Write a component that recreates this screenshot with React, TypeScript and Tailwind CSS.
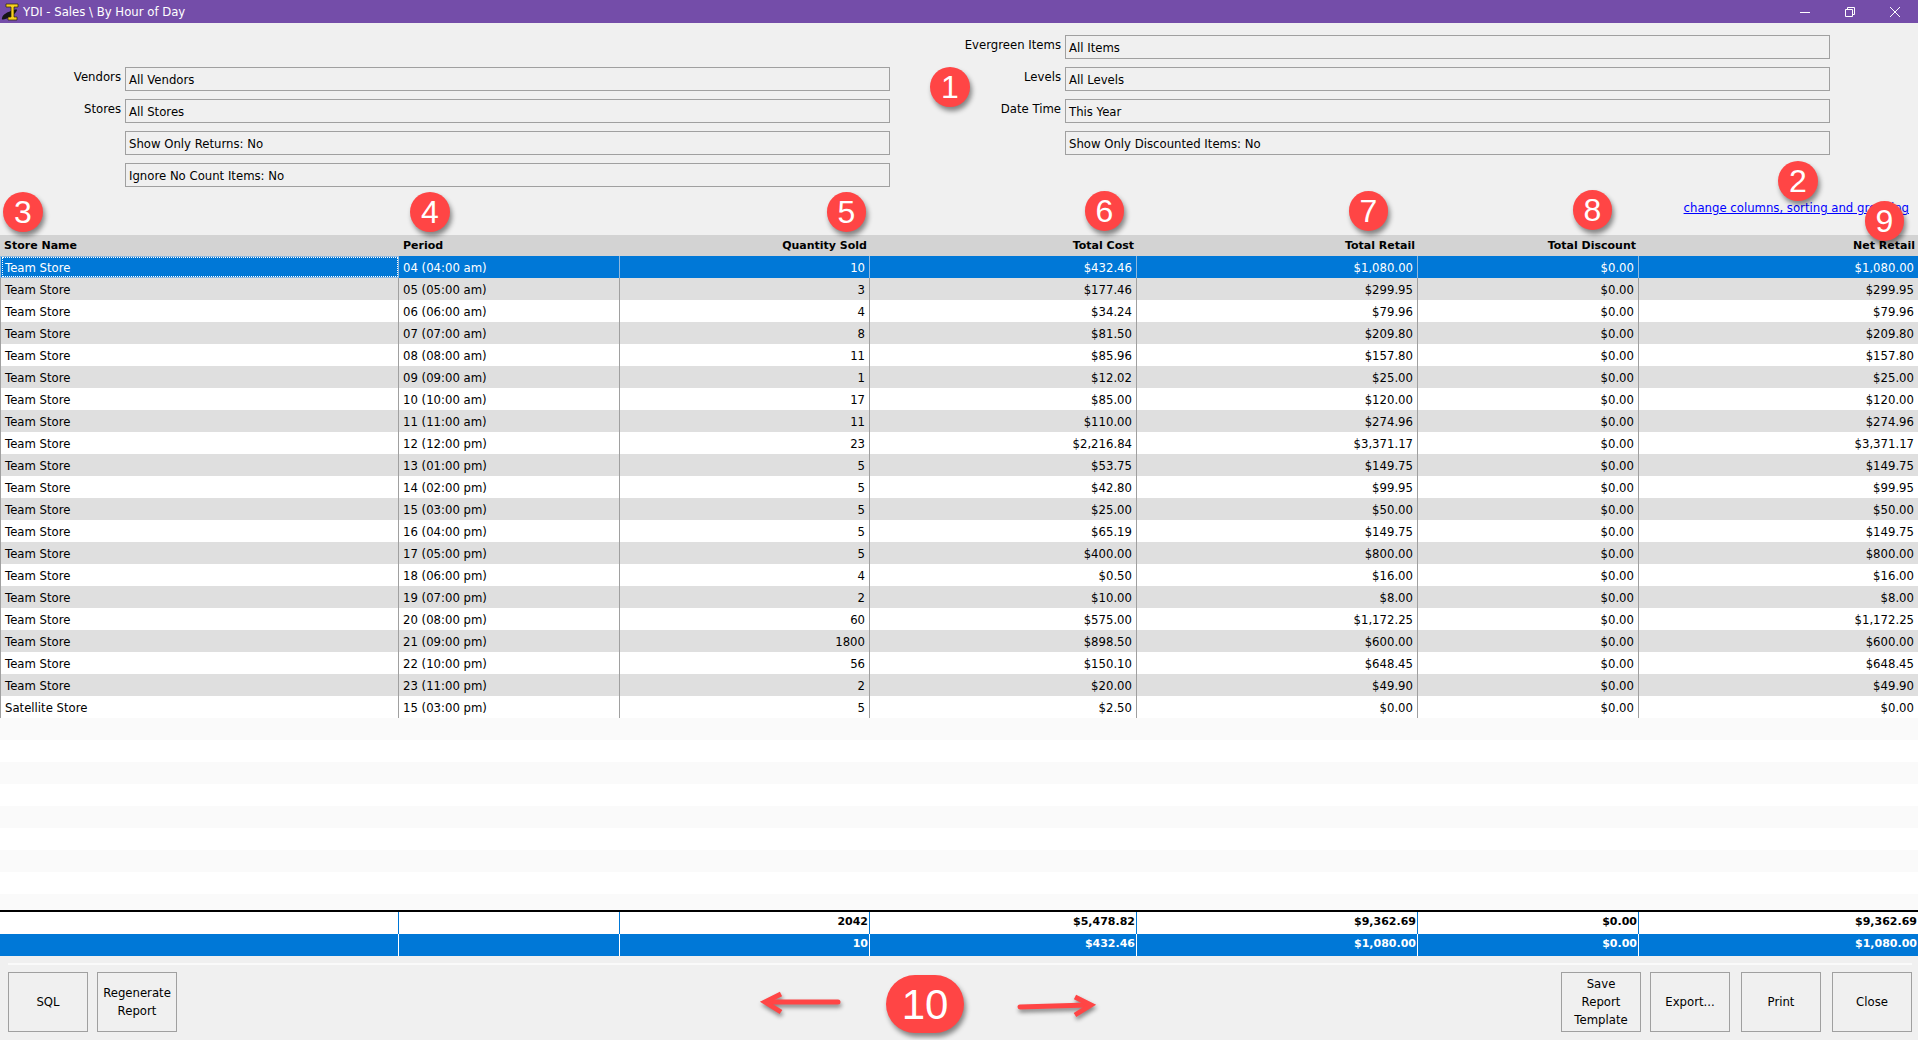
const rows: string[][] = [
  ["Team Store", "04 (04:00 am)", "10", "$432.46", "$1,080.00", "$0.00", "$1,080.00"],
  ["Team Store", "05 (05:00 am)", "3", "$177.46", "$299.95", "$0.00", "$299.95"],
  ["Team Store", "06 (06:00 am)", "4", "$34.24", "$79.96", "$0.00", "$79.96"],
  ["Team Store", "07 (07:00 am)", "8", "$81.50", "$209.80", "$0.00", "$209.80"],
  ["Team Store", "08 (08:00 am)", "11", "$85.96", "$157.80", "$0.00", "$157.80"],
  ["Team Store", "09 (09:00 am)", "1", "$12.02", "$25.00", "$0.00", "$25.00"],
  ["Team Store", "10 (10:00 am)", "17", "$85.00", "$120.00", "$0.00", "$120.00"],
  ["Team Store", "11 (11:00 am)", "11", "$110.00", "$274.96", "$0.00", "$274.96"],
  ["Team Store", "12 (12:00 pm)", "23", "$2,216.84", "$3,371.17", "$0.00", "$3,371.17"],
  ["Team Store", "13 (01:00 pm)", "5", "$53.75", "$149.75", "$0.00", "$149.75"],
  ["Team Store", "14 (02:00 pm)", "5", "$42.80", "$99.95", "$0.00", "$99.95"],
  ["Team Store", "15 (03:00 pm)", "5", "$25.00", "$50.00", "$0.00", "$50.00"],
  ["Team Store", "16 (04:00 pm)", "5", "$65.19", "$149.75", "$0.00", "$149.75"],
  ["Team Store", "17 (05:00 pm)", "5", "$400.00", "$800.00", "$0.00", "$800.00"],
  ["Team Store", "18 (06:00 pm)", "4", "$0.50", "$16.00", "$0.00", "$16.00"],
  ["Team Store", "19 (07:00 pm)", "2", "$10.00", "$8.00", "$0.00", "$8.00"],
  ["Team Store", "20 (08:00 pm)", "60", "$575.00", "$1,172.25", "$0.00", "$1,172.25"],
  ["Team Store", "21 (09:00 pm)", "1800", "$898.50", "$600.00", "$0.00", "$600.00"],
  ["Team Store", "22 (10:00 pm)", "56", "$150.10", "$648.45", "$0.00", "$648.45"],
  ["Team Store", "23 (11:00 pm)", "2", "$20.00", "$49.90", "$0.00", "$49.90"],
  ["Satellite Store", "15 (03:00 pm)", "5", "$2.50", "$0.00", "$0.00", "$0.00"],
];

const gridCols = "grid grid-cols-[399px_221px_250px_267px_281px_221px_279px]";

function FilterRow({ label, value, left }: { label?: string; value: string; left?: boolean }) {
  return (
    <div className="flex h-[24px]">
      <div className={`${left ? "w-[121px]" : "w-[170px]"} text-right leading-[20px]`}>{label}</div>
      <div className={`w-[765px] ml-[4px] border border-[#a0a0a0] pl-[3px] leading-[24px]`}>{value}</div>
    </div>
  );
}

function Btn({ children }: { children: React.ReactNode }) {
  return (
    <div className="w-[80px] h-[60px] border border-[#a0a0a0] flex items-center justify-center text-center leading-[18px] pb-[1px]">
      {children}
    </div>
  );
}

function Badge({ n, className }: { n: string; className: string }) {
  return (
    <div className={`absolute rounded-full bg-[#ff4545] text-white flex items-center justify-center [font-family:Liberation_Sans,sans-serif] shadow-[2px_4px_5px_rgba(0,0,0,0.45)] ${className}`}>
      {n}
    </div>
  );
}

export default function App() {
  return (
    <div className="relative w-full h-screen overflow-hidden flex flex-col bg-[#f0f0f0] text-black text-[11.7px] [font-family:DejaVu_Sans,sans-serif]">
      {/* title bar */}
      <div className="h-[23px] shrink-0 bg-[#744da9] flex items-center text-white">
        <svg width="20" height="20" viewBox="0 0 20 20" className="ml-[1px] shrink-0">
          <path d="M1 16c1-4 6-6 9-7 3-1 6-2 6-1s-3 5-7 7-9 4-8 1z" fill="#151515" />
          <path d="M5 2h12v3h-4v10h3v3H7v-3h3V5H5z" fill="#f8d020" stroke="#2a2200" strokeWidth="0.7" />
        </svg>
        <span className="ml-[2px] pt-[2px]">YDI - Sales \ By Hour of Day</span>
        <div className="ml-auto flex items-center pr-[18px] gap-[35px]">
          <svg width="10" height="10" viewBox="0 0 10 10"><path d="M0 5.5h10" stroke="#fff" strokeWidth="1" /></svg>
          <svg width="10" height="10" viewBox="0 0 10 10" fill="none" stroke="#fff" strokeWidth="1"><path d="M.5 2.5h7v7h-7zM2.5 2.5v-2h7v7h-2" /></svg>
          <svg width="10" height="10" viewBox="0 0 10 10" stroke="#fff" strokeWidth="1"><path d="M0 0l10 10M10 0L0 10" /></svg>
        </div>
      </div>

      {/* filters */}
      <div className="h-[212px] shrink-0 flex">
        <div className="w-[891px] shrink-0 pt-[44px] flex flex-col gap-[8px]">
          <FilterRow left label="Vendors" value="All Vendors" />
          <FilterRow left label="Stores" value="All Stores" />
          <FilterRow left value="Show Only Returns: No" />
          <FilterRow left value="Ignore No Count Items: No" />
        </div>
        <div className="flex-1 pt-[12px] flex flex-col gap-[8px]">
          <FilterRow label="Evergreen Items" value="All Items" />
          <FilterRow label="Levels" value="All Levels" />
          <FilterRow label="Date Time" value="This Year" />
          <FilterRow value="Show Only Discounted Items: No" />
          <div className="mt-[37px] pr-[9px] text-right">
            <span className="text-[#0000ff] underline">change columns, sorting and grouping</span>
          </div>
        </div>
      </div>

      {/* header */}
      <div className={`${gridCols} h-[21px] shrink-0 bg-[#d3d3d3] font-bold text-[11px] items-center pt-[1px]`}>
        <div className="pl-[4px]">Store Name</div>
        <div className="pl-[4px]">Period</div>
        {["Quantity Sold", "Total Cost", "Total Retail", "Total Discount", "Net Retail"].map((h) => (
          <div key={h} className="text-right pr-[3px]">{h}</div>
        ))}
      </div>

      {/* rows */}
      <div className="flex-1 min-h-0 overflow-hidden bg-white">
        {rows.map((r, i) => (
          <div
            key={i}
            className={`${gridCols} grid-rows-[22px] h-[22px] ${i === 0 ? "bg-[#0078d7] text-white" : i % 2 === 1 ? "bg-[#dfdfdf]" : "bg-white"}`}
          >
            {r.map((c, j) => (
              <div
                key={j}
                className={`leading-[24px] ${j < 6 ? `border-r ${i === 0 ? "border-[#8fb8de]" : "border-[#a0a0a0]"}` : ""} ${j === 0 ? (i === 0 ? "border-l border-l-[#8fb8de] border-y border-y-[#8fb8de]" : "border-l border-l-[#a0a0a0]") : ""} ${j < 2 ? "pl-[4px]" : "text-right pr-[4px]"}`}
              >
                {i === 0 && j === 0 ? (
                  <div className="h-full border border-dotted border-white -ml-[3px] pl-[2px] leading-[20px]">{c}</div>
                ) : (
                  c
                )}
              </div>
            ))}
          </div>
        ))}
        {[0, 1, 2, 3, 4, 5, 6, 7, 8].map((i) => (
          <div key={i} className={`h-[22px] ${i % 2 === 0 ? "bg-[#fafafa]" : "bg-white"}`} />
        ))}
      </div>

      {/* totals */}
      <div className="shrink-0 border-t-2 border-black font-bold text-[11px]">
        <div className={`${gridCols} h-[22px] bg-white`}>
          {["", "", "2042", "$5,478.82", "$9,362.69", "$0.00", "$9,362.69"].map((c, j) => (
            <div key={j} className={`text-right leading-[20px] pr-[1px] ${j < 6 ? "border-r border-[#0078d7]" : ""}`}>{c}</div>
          ))}
        </div>
        <div className={`${gridCols} h-[22px] bg-[#0078d7] text-white`}>
          {["", "", "10", "$432.46", "$1,080.00", "$0.00", "$1,080.00"].map((c, j) => (
            <div key={j} className={`text-right leading-[20px] pr-[1px] ${j < 6 ? "border-r border-white" : ""}`}>{c}</div>
          ))}
        </div>
      </div>

      {/* footer */}
      <div className="h-[84px] shrink-0 pl-[8px] pr-[6px] pt-[7px]">
        <div className="h-[2px] bg-[#fafafa]" />
        <div className="mt-[7px] flex">
          <div className="flex gap-[9px]">
            <Btn>SQL</Btn>
            <Btn>Regenerate<br />Report</Btn>
          </div>
          <div className="ml-auto flex gap-[9px]">
            <Btn>Save<br />Report<br />Template</Btn>
            <Btn>Export...</Btn>
            <div className="ml-[2px] flex gap-[11px]">
              <Btn>Print</Btn>
              <Btn>Close</Btn>
            </div>
          </div>
        </div>
      </div>

      {/* annotations */}
      <Badge n="1" className="left-[930px] top-[67px] w-[40px] h-[40px] text-[32px]" />
      <Badge n="2" className="left-[1778px] top-[161px] w-[40px] h-[40px] text-[32px]" />
      <Badge n="3" className="left-[3px] top-[192px] w-[40px] h-[40px] text-[32px]" />
      <Badge n="4" className="left-[410px] top-[192px] w-[40px] h-[40px] text-[32px]" />
      <Badge n="5" className="left-[827px] top-[192px] w-[39px] h-[40px] text-[32px]" />
      <Badge n="6" className="left-[1085px] top-[191px] w-[39px] h-[40px] text-[32px]" />
      <Badge n="7" className="left-[1349px] top-[191px] w-[39px] h-[40px] text-[32px]" />
      <Badge n="8" className="left-[1573px] top-[190px] w-[39px] h-[40px] text-[32px]" />
      <Badge n="9" className="left-[1865px] top-[201px] w-[39px] h-[40px] text-[32px]" />
      <Badge n="10" className="left-[886px] top-[975px] w-[78px] h-[58px] text-[42px]" />

      <svg className="absolute left-[750px] top-[985px] drop-shadow-[1px_3px_2px_rgba(0,0,0,0.45)]" width="100" height="35" viewBox="0 0 100 35" fill="none" stroke="#ff4545" strokeLinecap="round">
        <path d="M88 17H20" strokeWidth="5" />
        <path d="M31 9L15 17l16 10" strokeWidth="5" strokeLinejoin="miter" strokeLinecap="butt" />
      </svg>
      <svg className="absolute left-[1010px] top-[985px] drop-shadow-[1px_3px_2px_rgba(0,0,0,0.45)]" width="100" height="35" viewBox="0 0 100 35" fill="none" stroke="#ff4545" strokeLinecap="round">
        <path d="M10 22l68-2" strokeWidth="5" />
        <path d="M65 12l16 8-16 10" strokeWidth="5" strokeLinejoin="miter" strokeLinecap="butt" />
      </svg>
    </div>
  );
}
